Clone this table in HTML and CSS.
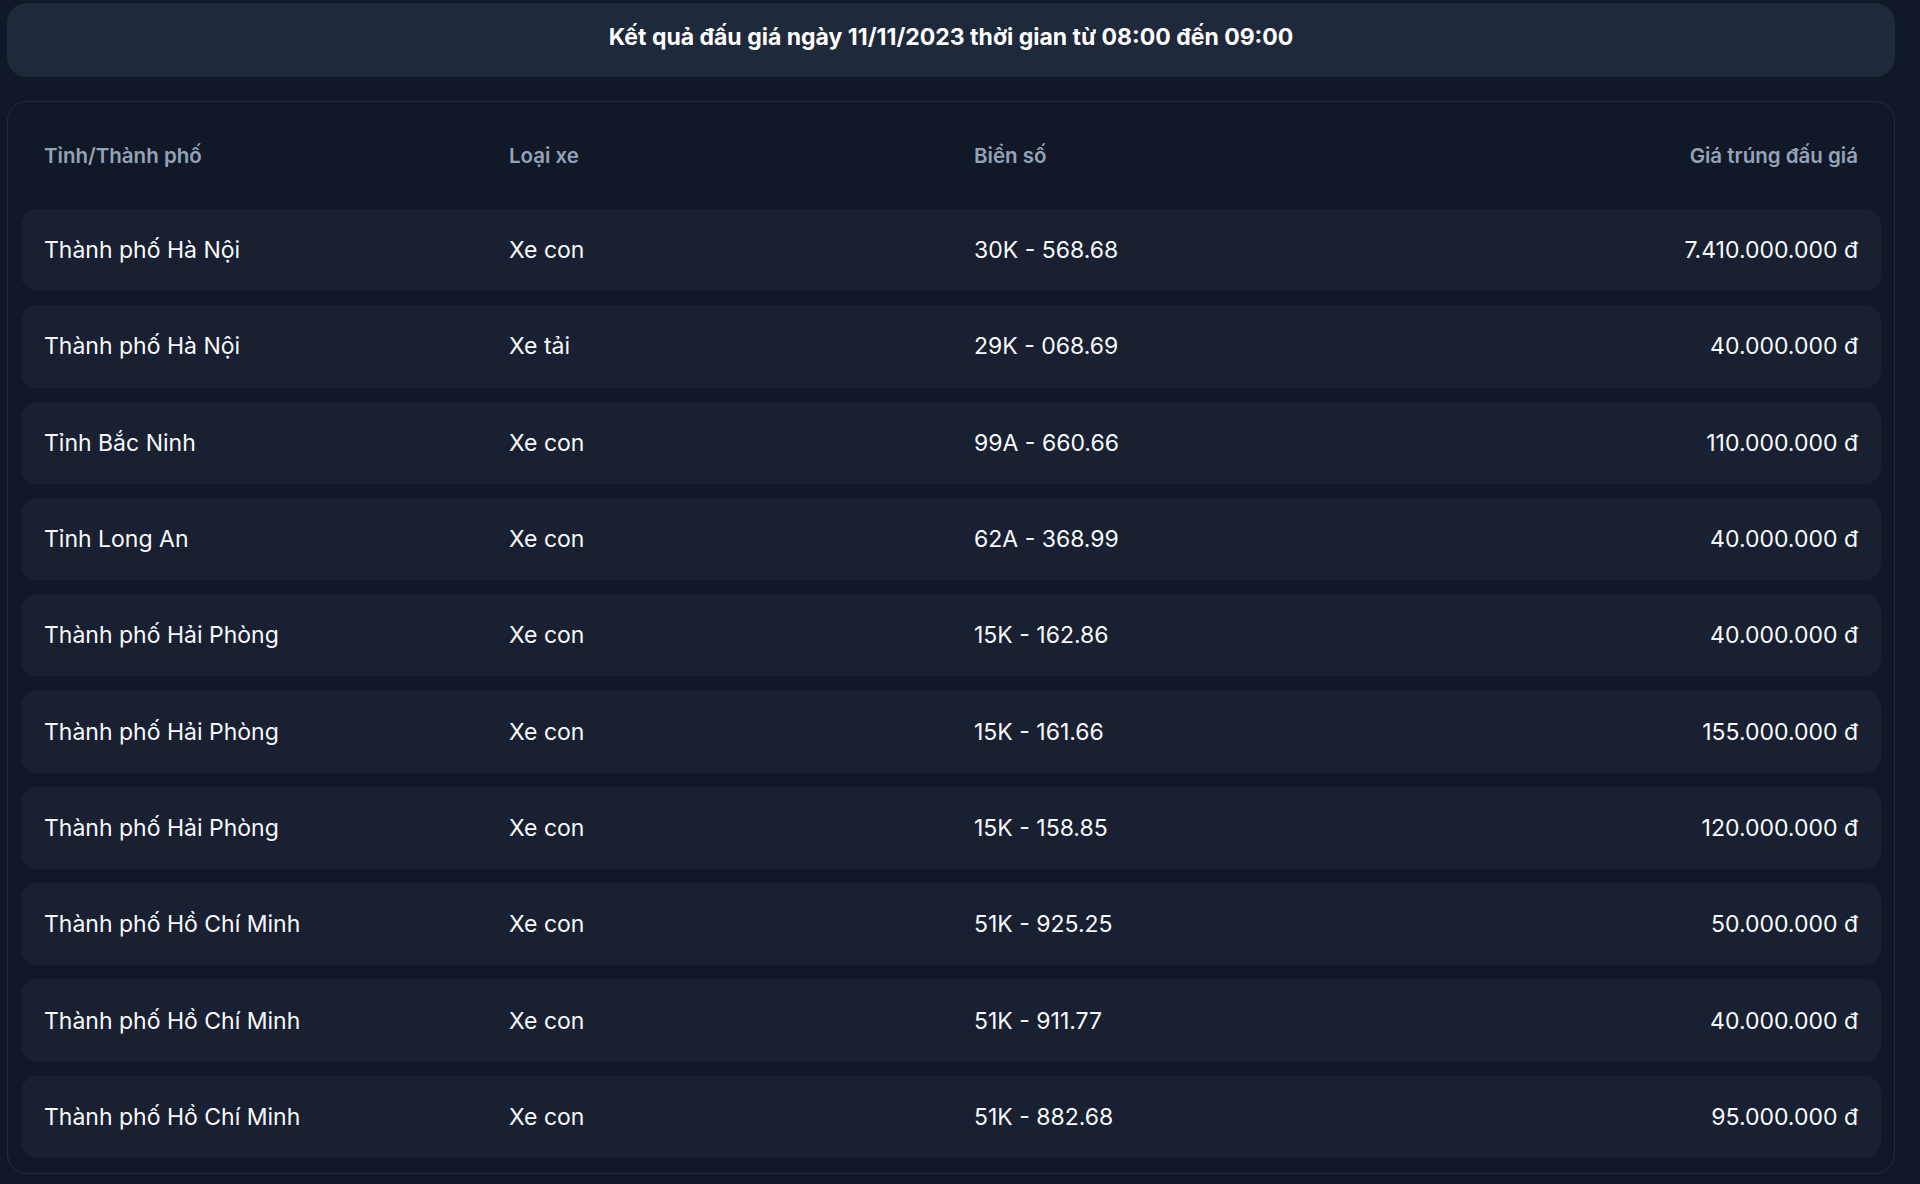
FILE: index.html
```html
<!DOCTYPE html>
<html lang="vi">
<head>
    <meta charset="UTF-8">
    <meta name="viewport" content="width=device-width, initial-scale=1.0">
    <title>Kết quả đấu giá</title>
    <link rel="stylesheet" href="styles.css">
</head>
<body>

<div class="page">
    <div class="banner">Kết quả đấu giá ngày 11/11/2023 thời gian từ 08:00 đến 09:00</div>

    <div class="table-box">
        <table class="result-table">
            <thead>
                <tr>
                    <th>Tỉnh/Thành phố</th>
                    <th>Loại xe</th>
                    <th>Biển số</th>
                    <th class="price">Giá trúng đấu giá</th>
                </tr>
            </thead>
            <tbody>
                <tr><td>Thành phố Hà Nội</td><td>Xe con</td><td>30K - 568.68</td><td class="price">7.410.000.000 đ</td></tr>
                <tr><td>Thành phố Hà Nội</td><td>Xe tải</td><td>29K - 068.69</td><td class="price">40.000.000 đ</td></tr>
                <tr><td>Tỉnh Bắc Ninh</td><td>Xe con</td><td>99A - 660.66</td><td class="price">110.000.000 đ</td></tr>
                <tr><td>Tỉnh Long An</td><td>Xe con</td><td>62A - 368.99</td><td class="price">40.000.000 đ</td></tr>
                <tr><td>Thành phố Hải Phòng</td><td>Xe con</td><td>15K - 162.86</td><td class="price">40.000.000 đ</td></tr>
                <tr><td>Thành phố Hải Phòng</td><td>Xe con</td><td>15K - 161.66</td><td class="price">155.000.000 đ</td></tr>
                <tr><td>Thành phố Hải Phòng</td><td>Xe con</td><td>15K - 158.85</td><td class="price">120.000.000 đ</td></tr>
                <tr><td>Thành phố Hồ Chí Minh</td><td>Xe con</td><td>51K - 925.25</td><td class="price">50.000.000 đ</td></tr>
                <tr><td>Thành phố Hồ Chí Minh</td><td>Xe con</td><td>51K - 911.77</td><td class="price">40.000.000 đ</td></tr>
                <tr><td>Thành phố Hồ Chí Minh</td><td>Xe con</td><td>51K - 882.68</td><td class="price">95.000.000 đ</td></tr>
            </tbody>
        </table>
    </div>
</div>

</body>
</html>
```

FILE: styles.css
```css
body {
    font-family: Inter, "Noto Sans", sans-serif;
    background: #111827;
    color: #f8fafc;
    margin: 0;
}
.page {
    width: 1888px;
    margin-left: 7px;
    padding-top: 3px;
}
.banner {
    background: #1e293b;
    border-radius: 20px;
    height: 68px;
    padding-bottom: 6px;
    display: flex;
    align-items: center;
    justify-content: center;
    font-size: 23px;
    font-weight: 700;
    color: #ffffff;
}
.table-box {
    margin-top: 24px;
    padding: 0 13px 1px;
    border: 1px solid #222c3e;
    border-radius: 20px;
}
.result-table {
    width: 100%;
    table-layout: fixed;
    border-collapse: separate;
    border-spacing: 0 14px;
}
.result-table th {
    height: 79px;
    padding: 0 23px;
    text-align: left;
    font-size: 20.5px;
    font-weight: 600;
    color: #94a3b8;
}
.result-table td {
    height: 82.3px;
    padding: 0 23px;
    background: #182031;
    font-size: 23px;
    font-weight: 400;
}
.result-table tbody tr td:first-child {
    border-radius: 16px 0 0 16px;
}
.result-table tbody tr td:last-child {
    border-radius: 0 16px 16px 0;
}
.result-table .price {
    text-align: right;
}
```
